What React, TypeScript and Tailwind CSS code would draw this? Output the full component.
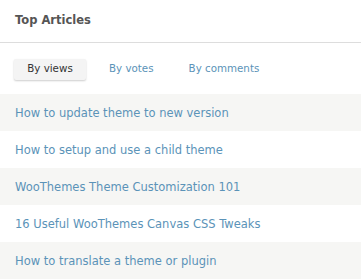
import React from 'react';

const articles = [
  'How to update theme to new version',
  'How to setup and use a child theme',
  'WooThemes Theme Customization 101',
  '16 Useful WooThemes Canvas CSS Tweaks',
  'How to translate a theme or plugin',
];

export default function App() {
  return (
    <div className="w-[361px] h-[280px] overflow-hidden bg-white font-['DejaVu_Sans',sans-serif]">
      <div className="h-[43px] border-b border-[#dddddd] px-[15px] pt-[12px]">
        <h2 className="text-[11.5px] font-bold text-[#555555] leading-[16px]">Top Articles</h2>
      </div>
      <div className="flex items-center h-[51px] pl-[14px] pt-[1px] text-[10.3px]">
        <button className="h-[21px] w-[72px] rounded-[2px] bg-[#f4f4f4] text-[#333333] shadow-[0_1px_2px_rgba(0,0,0,0.2)]">
          By views
        </button>
        <span className="ml-[23px] text-[#5b93b8]">By votes</span>
        <span className="ml-[35px] text-[#5b93b8]">By comments</span>
      </div>
      <ul>
        {articles.map((title, i) => (
          <li
            key={title}
            className={`h-[37px] flex items-center px-[15px] pt-[3px] text-[11.5px] text-[#5b93b8] ${i % 2 === 0 ? 'bg-[#f6f6f4]' : 'bg-white'}`}
          >
            {title}
          </li>
        ))}
      </ul>
    </div>
  );
}
